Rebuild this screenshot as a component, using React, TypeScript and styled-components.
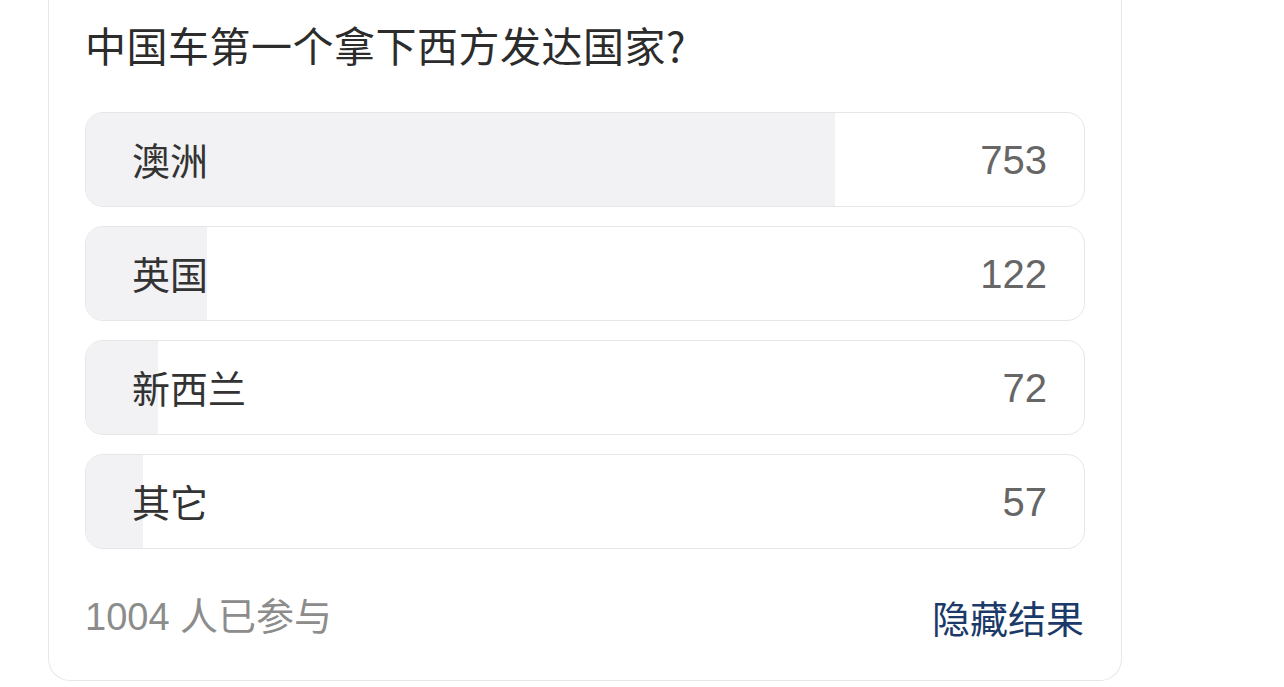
import React, { FC } from 'react';
import styled, { createGlobalStyle } from 'styled-components';

interface IOption {
  label: string;
  votes: number;
}

const options: IOption[] = [
  { label: '澳洲', votes: 753 },
  { label: '英国', votes: 122 },
  { label: '新西兰', votes: 72 },
  { label: '其它', votes: 57 },
];

const total = 1004;

const GlobalStyle = createGlobalStyle`
  html, body {
    margin: 0;
    padding: 0;
    background: #ffffff;
  }
  body {
    font-family: "Liberation Sans", "Noto Sans CJK SC", sans-serif;
  }
`;

const App: FC = () => {
  return (
    <Page>
      <GlobalStyle />
      <PollCard>
        <Title>中国车第一个拿下西方发达国家?</Title>
        <OptionList>
          {options.map((item) => (
            <OptionRow key={item.label}>
              {/* bar width comes from vote share */}
              <Fill style={{ width: `${(item.votes / total) * 100}%` }} />
              <Label>{item.label}</Label>
              <Count>{item.votes}</Count>
            </OptionRow>
          ))}
        </OptionList>
        <Footer>
          <Participants>{total} 人已参与</Participants>
          <HideLink>隐藏结果</HideLink>
        </Footer>
      </PollCard>
    </Page>
  );
};

export default App;

const Page = styled.div`
  width: 1284px;
  height: 687px;
  padding-left: 48px;
  box-sizing: border-box;
  overflow: hidden;
`;

const PollCard = styled.div`
  width: 1074px;
  box-sizing: border-box;
  padding: 16px 36px 38px 36px;
  border: 1px solid #e7e7e9;
  border-top: none;
  border-radius: 0 0 22px 22px;
  background: #fff;
`;

const Title = styled.div`
  font-family: "Noto Sans CJK SC", sans-serif;
  font-size: 41px;
  line-height: 56px;
  letter-spacing: 0.5px;
  color: #2c2c2c;
  margin-bottom: 40px;
`;

const OptionList = styled.div`
  display: flex;
  flex-direction: column;
  gap: 19px;
`;

const OptionRow = styled.div`
  position: relative;
  height: 95px;
  box-sizing: border-box;
  border: 1px solid #e6e6e8;
  border-radius: 18px;
  overflow: hidden;
  display: flex;
  align-items: center;
  justify-content: space-between;
  padding: 0 37px 0 46px;
`;

const Fill = styled.div`
  position: absolute;
  left: 0;
  top: 0;
  bottom: 0;
  background: #f2f2f4;
`;

const Label = styled.span`
  position: relative;
  top: -1px;
  font-family: "Noto Sans CJK SC", sans-serif;
  font-size: 38px;
  line-height: 48px;
  color: #333;
`;

const Count = styled.span`
  position: relative;
  font-family: "Liberation Sans", sans-serif;
  font-size: 40px;
  line-height: 48px;
  color: #666;
`;

const Footer = styled.div`
  display: flex;
  align-items: center;
  justify-content: space-between;
  margin-top: 43px;
  height: 50px;
`;

const Participants = styled.span`
  font-family: "Liberation Sans", "Noto Sans CJK SC", sans-serif;
  font-size: 38px;
  line-height: 50px;
  color: #8c8c8c;
`;

const HideLink = styled.span`
  font-family: "Noto Sans CJK SC", sans-serif;
  font-size: 38px;
  line-height: 50px;
  color: #1c3a69;
  margin-right: 1px;
  cursor: pointer;
`;
